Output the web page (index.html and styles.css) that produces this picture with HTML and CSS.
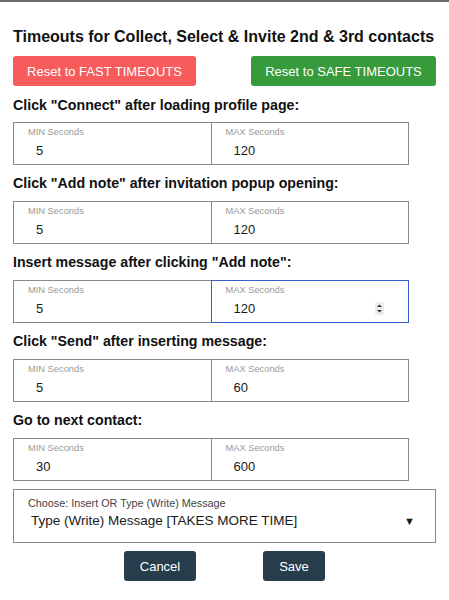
FILE: index.html
```html
<!DOCTYPE html>
<html lang="en">

<head>
    <meta charset="utf-8">
    <meta name="viewport" content="width=device-width, initial-scale=1.0">
    <title>Timeouts</title>
    <link rel="stylesheet" href="styles.css">
</head>

<body>
    <div class="panel">
        <h1 class="titel">Timeouts for Collect, Select &amp; Invite 2nd &amp; 3rd contacts</h1>

        <div class="reset">
            <button class="knap fast">Reset to FAST TIMEOUTS</button>
            <button class="knap safe">Reset to SAFE TIMEOUTS</button>
        </div>

        <h2 class="trin">Click "Connect" after loading profile page:</h2>
        <div class="par">
            <div class="felt"><span class="cap">MIN Seconds</span><span class="vaerdi">5</span></div>
            <div class="felt"><span class="cap">MAX Seconds</span><span class="vaerdi">120</span></div>
        </div>

        <h2 class="trin">Click "Add note" after invitation popup opening:</h2>
        <div class="par">
            <div class="felt"><span class="cap">MIN Seconds</span><span class="vaerdi">5</span></div>
            <div class="felt"><span class="cap">MAX Seconds</span><span class="vaerdi">120</span></div>
        </div>

        <h2 class="trin">Insert message after clicking "Add note":</h2>
        <div class="par">
            <div class="felt"><span class="cap">MIN Seconds</span><span class="vaerdi">5</span></div>
            <div class="felt aktiv"><span class="cap">MAX Seconds</span><span class="vaerdi">120</span>
                <svg class="spin" width="9" height="13" viewBox="0 0 9 13">
                    <rect x="0" y="0" width="9" height="13" rx="2" fill="#ececec"/>
                    <path d="M2 5 L4.5 2.5 L7 5 Z" fill="#333"/>
                    <path d="M2 8 L4.5 10.5 L7 8 Z" fill="#333"/>
                </svg>
            </div>
        </div>

        <h2 class="trin">Click "Send" after inserting message:</h2>
        <div class="par">
            <div class="felt"><span class="cap">MIN Seconds</span><span class="vaerdi">5</span></div>
            <div class="felt"><span class="cap">MAX Seconds</span><span class="vaerdi">60</span></div>
        </div>

        <h2 class="trin">Go to next contact:</h2>
        <div class="par">
            <div class="felt"><span class="cap">MIN Seconds</span><span class="vaerdi">30</span></div>
            <div class="felt"><span class="cap">MAX Seconds</span><span class="vaerdi">600</span></div>
        </div>

        <div class="vaelg">
            <span class="vaelg-cap">Choose: Insert OR Type (Write) Message</span>
            <div class="vaelg-linje">
                <span>Type (Write) Message [TAKES MORE TIME]</span>
                <span class="pil">&#9660;</span>
            </div>
        </div>

        <div class="bund">
            <button class="knap moerk annuller">Cancel</button>
            <button class="knap moerk gem">Save</button>
        </div>
    </div>
</body>

</html>
```

FILE: styles.css
```css
body {
    margin: 0;
    border-top: 2px solid #6d6d6d;
    font-family: "Liberation Sans", Arial, sans-serif;
    background: #ffffff;
    color: #111111;
}

.panel {
    padding: 0 13px;
    width: 423px;
}

.titel {
    font-size: 16px;
    font-weight: bold;
    line-height: 20px;
    margin: 25px 0 9px 0;
    white-space: nowrap;
}

.reset {
    display: flex;
    justify-content: space-between;
}

.knap {
    font-family: "Liberation Sans", Arial, sans-serif;
    font-size: 13px;
    color: #ffffff;
    border: none;
    border-radius: 3px;
    height: 30px;
    padding: 0;
}

.fast {
    background-color: #f85b5b;
    width: 183px;
}

.safe {
    background-color: #379a3b;
    width: 185px;
}

.trin {
    font-size: 14.2px;
    font-weight: bold;
    line-height: 18px;
    margin: 9px 0 9px 0;
}

.reset + .trin {
    margin-top: 10px;
    margin-bottom: 8px;
}

.par {
    display: flex;
    width: 396px;
}

.felt {
    flex: 1;
    height: 43px;
    border: 1px solid #8a8a8a;
    box-sizing: border-box;
    padding: 3px 0 0 14px;
    display: flex;
    flex-direction: column;
    position: relative;
}

.felt + .felt {
    border-left: 1px solid #8a8a8a;
    margin-left: -1px;
    padding-left: 14px;
}

.cap {
    font-size: 9.3px;
    color: #9a9a9a;
    line-height: 12px;
}

.vaerdi {
    font-size: 13px;
    color: #1a1a1a;
    line-height: 16px;
    margin-top: 5px;
    padding-left: 8px;
}

.aktiv {
    border: 1.5px solid #3560cc !important;
    z-index: 1;
}

.spin {
    position: absolute;
    right: 24px;
    top: 21px;
}

.vaelg {
    margin-top: 8px;
    height: 54px;
    border: 1px solid #8a8a8a;
    box-sizing: border-box;
    padding: 7px 20px 0 14px;
}

.vaelg-cap {
    display: block;
    font-size: 10.8px;
    color: #444444;
    line-height: 12px;
}

.vaelg-linje {
    display: flex;
    justify-content: space-between;
    font-size: 13.5px;
    color: #1a1a1a;
    line-height: 18px;
    margin-top: 3px;
    padding-left: 3px;
}

.pil {
    font-size: 11px;
}

.bund {
    display: flex;
    justify-content: center;
    gap: 67px;
    margin-top: 8px;
}

.moerk {
    background-color: #283d4c;
}

.annuller {
    width: 72px;
}

.gem {
    width: 62px;
}
```
